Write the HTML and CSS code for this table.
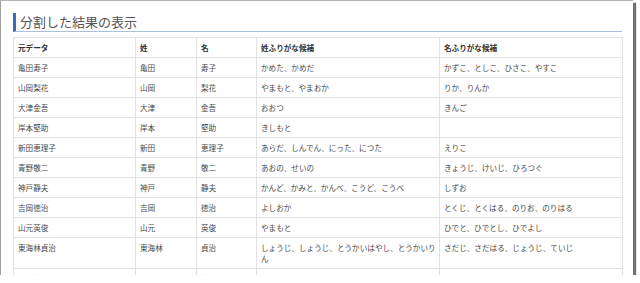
FILE: index.html
```html
<!DOCTYPE html>
<html lang="ja">
<head>
<meta charset="utf-8">
<link rel="stylesheet" href="styles.css">
</head>
<body>
<div class="frame">
  <h2 class="title">分割した結果の表示</h2>
  <table class="result">
    <colgroup>
      <col class="c1"><col class="c2"><col class="c3"><col class="c4"><col class="c5">
    </colgroup>
    <thead>
      <tr><th>元データ</th><th>姓</th><th>名</th><th>姓ふりがな候補</th><th>名ふりがな候補</th></tr>
    </thead>
    <tbody>
      <tr><td>亀田寿子</td><td>亀田</td><td>寿子</td><td>かめた、かめだ</td><td>かずこ、としこ、ひさこ、やすこ</td></tr>
      <tr><td>山岡梨花</td><td>山岡</td><td>梨花</td><td>やまもと、やまおか</td><td>りか、りんか</td></tr>
      <tr><td>大津金吾</td><td>大津</td><td>金吾</td><td>おおつ</td><td>きんご</td></tr>
      <tr><td>岸本堅助</td><td>岸本</td><td>堅助</td><td>きしもと</td><td></td></tr>
      <tr><td>新田恵理子</td><td>新田</td><td>恵理子</td><td>あらだ、しんでん、にった、につた</td><td>えりこ</td></tr>
      <tr><td>青野敬二</td><td>青野</td><td>敬二</td><td>あおの、せいの</td><td>きょうじ、けいじ、ひろつぐ</td></tr>
      <tr><td>神戸静夫</td><td>神戸</td><td>静夫</td><td>かんど、かみと、かんべ、こうど、こうべ</td><td>しずお</td></tr>
      <tr><td>吉岡徳治</td><td>吉岡</td><td>徳治</td><td>よしおか</td><td>とくじ、とくはる、のりお、のりはる</td></tr>
      <tr><td>山元英俊</td><td>山元</td><td>英俊</td><td>やまもと</td><td>ひでと、ひでとし、ひでよし</td></tr>
      <tr><td>東海林貞治</td><td>東海林</td><td>貞治</td><td>しょうじ、しょうじ、とうかいはやし、とうかいりん</td><td>さだじ、さだはる、じょうじ、ていじ</td></tr>
      <tr><td>氏家結羽</td><td>氏家</td><td>結羽</td><td>うじけ、うじか、うじいえ</td><td></td></tr>
    </tbody>
  </table>
</div>
</body>
</html>
```

FILE: styles.css
```css
html, body {
  margin: 0;
  padding: 0;
  background: #ffffff;
}
body {
  font-family: "Noto Sans CJK JP", "Noto Sans", sans-serif;
  color: #333333;
}
.frame {
  box-sizing: border-box;
  width: 633px;
  height: 275px;
  overflow: hidden;
  background: #ffffff;
  border-top: 1px solid #b4b4b4;
  border-left: 1px solid #a0a0a0;
  box-shadow: 3px 3px 1px #707070;
  padding: 12px 11px 0 12px;
}
.title {
  margin: 0;
  height: 19px;
  box-sizing: border-box;
  border-left: 3px solid #3b6db3;
  border-bottom: 1px solid #a8c0dc;
  padding-left: 4px;
  font-size: 13px;
  line-height: 18px;
  font-weight: normal;
  color: #555555;
}
.result {
  margin-top: 5px;
  width: 609px;
  border-collapse: collapse;
  table-layout: fixed;
  font-size: 7.6px;
  line-height: 11px;
}
.result th, .result td {
  border: 1px solid #e2e2e2;
  padding: 4px 1px 4px 4px;
  text-align: left;
  vertical-align: top;
}
.result th {
  font-weight: bold;
  color: #333333;
}
.result td {
  color: #4a4a4a;
}
.c1 { width: 122px; }
.c2 { width: 61px; }
.c3 { width: 60px; }
.c4 { width: 183px; }
.c5 { width: 183px; }
```
